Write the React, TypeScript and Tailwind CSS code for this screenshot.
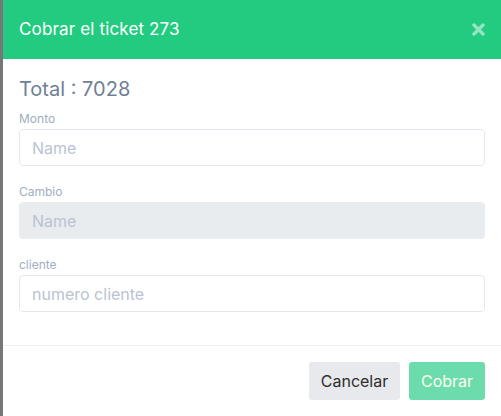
import React from "react";

export default function App() {
  return (
    <div className="flex h-[416px] w-[501px] overflow-hidden font-['Inter',sans-serif]">
      {/* backdrop edge */}
      <div className="w-[3px] shrink-0 bg-[#777777]" />
      <div className="flex flex-1 flex-col bg-white">
        <div className="flex h-[59px] shrink-0 items-center justify-between bg-[#23cb80] pl-4 pr-[16px]">
          <h5 className="text-[17px] tracking-[0.15px] text-white">Cobrar el ticket 273</h5>
          <button className="text-[#93e4c0]">
            <svg width="13" height="13" viewBox="0 0 13 13">
              <path
                d="M2 2 L11 11 M11 2 L2 11"
                stroke="currentColor"
                strokeWidth="3.4"
                strokeLinecap="round"
              />
            </svg>
          </button>
        </div>
        <div className="flex flex-col px-4 pt-[18px] pb-[33px]">
          <p className="text-[20px] leading-[24px] text-[#718096]">Total : 7028</p>
          <label className="mt-[11px] text-[12px] leading-[14px] text-[#a0aec0]">Monto</label>
          <input
            placeholder="Name"
            className="mt-[3px] h-[37px] rounded border border-[#e2e8f0] px-3 text-[16px] placeholder:text-[#b9c3d3] outline-none"
          />
          <label className="mt-[19px] text-[12px] leading-[14px] text-[#a0aec0]">Cambio</label>
          <input
            placeholder="Name"
            disabled
            className="mt-[3px] h-[37px] rounded border border-[#e9ecef] bg-[#e9ecef] px-3 text-[16px] placeholder:text-[#b9c3d3] outline-none"
          />
          <label className="mt-[19px] text-[12px] leading-[14px] text-[#a0aec0]">cliente</label>
          <input
            placeholder="numero cliente"
            className="mt-[3px] h-[37px] rounded border border-[#e2e8f0] px-3 text-[16px] placeholder:text-[#b9c3d3] outline-none"
          />
        </div>
        <div className="flex justify-end gap-[9px] border-t border-[#eeeef2] px-4 pt-4">
          <button className="h-[38px] w-[91px] rounded-[3px] bg-[#e8e9ec] text-[16px] text-[#2d2d2d]">
            Cancelar
          </button>
          <button className="h-[38px] w-[76px] rounded-[3px] bg-[#6cdcad] text-[16px] text-[#fdfdf0]">
            Cobrar
          </button>
        </div>
      </div>
    </div>
  );
}
